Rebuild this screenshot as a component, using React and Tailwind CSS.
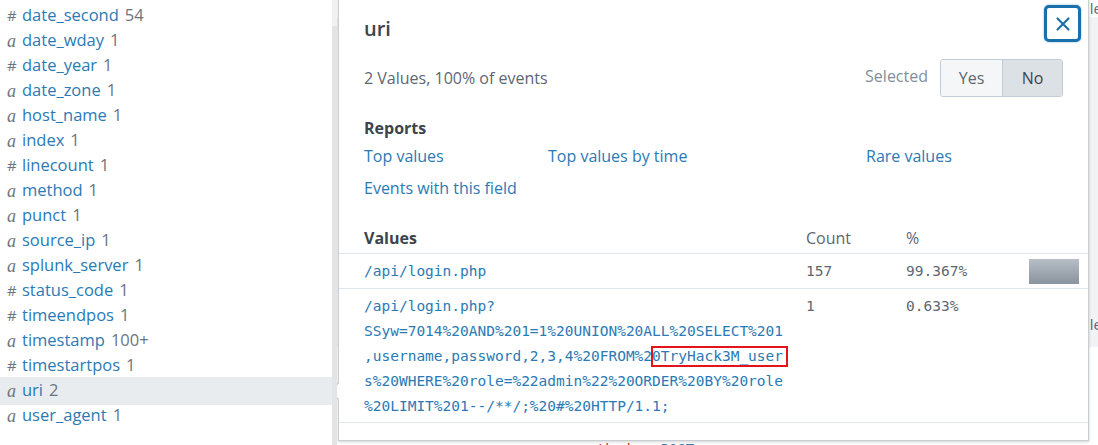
import React from "react";

const fields = [
  ["#", "date_second", "54"],
  ["a", "date_wday", "1"],
  ["#", "date_year", "1"],
  ["a", "date_zone", "1"],
  ["a", "host_name", "1"],
  ["a", "index", "1"],
  ["#", "linecount", "1"],
  ["a", "method", "1"],
  ["a", "punct", "1"],
  ["a", "source_ip", "1"],
  ["a", "splunk_server", "1"],
  ["#", "status_code", "1"],
  ["#", "timeendpos", "1"],
  ["a", "timestamp", "100+"],
  ["#", "timestartpos", "1"],
  ["a", "uri", "2"],
  ["a", "user_agent", "1"],
];

const sans = { fontFamily: "'Open Sans', sans-serif" };

function Sidebar() {
  return (
    <div className="flex w-[337px] shrink-0 bg-white">
      <div className="w-[332px] pt-[3px]">
        {fields.map(([t, name, count]) => (
          <div
            key={name}
            className={
              "flex items-center pl-[7px] text-[16.5px] " +
              (name === "uri" ? "-my-[1.5px] h-[28px] bg-[#e9ecee]" : "h-[25px]")
            }
          >
            {t === "#" ? (
              <span className="w-[15px] text-[15px] text-[#6b7580]">#</span>
            ) : (
              <span
                className="w-[15px] italic text-[#6b7580] text-[18px] leading-none"
                style={{ fontFamily: "'Liberation Serif', serif" }}
              >
                a
              </span>
            )}
            <span className="text-[#2b7ab5]">{name}</span>
            <span className="ml-[6px] text-[#6b7580]">{count}</span>
          </div>
        ))}
      </div>
      <div className="flex w-[5px] flex-col">
        <div className="h-[26px] bg-[#f0f1f2]" />
        <div className="flex-1 bg-[#e2e4e6]" />
      </div>
    </div>
  );
}

function CloseIcon() {
  return (
    <svg width="16" height="16" viewBox="0 0 16 16">
      <path d="M2.5 2.5 L13.5 13.5 M13.5 2.5 L2.5 13.5" stroke="#1d6fa9" strokeWidth="2.2" strokeLinecap="round" />
    </svg>
  );
}

function Popup() {
  const mono = { fontFamily: "'DejaVu Sans Mono', monospace" };
  return (
    <div
      className="absolute left-[1px] top-[-10px] w-[751px] h-[451px] border border-[#c9ced4] bg-white shadow-[0_1px_3px_rgba(0,0,0,0.18)]"
      style={sans}
    >
      {/* arrow */}
      <div className="absolute left-[-9px] top-[390px] h-0 w-0 border-y-[10px] border-r-[9px] border-y-transparent border-r-[#c9ced4]" />
      <div className="absolute left-[-7px] top-[391px] h-0 w-0 border-y-[9px] border-r-[8px] border-y-transparent border-r-white" />

      <button className="absolute right-[7px] top-[14px] flex h-[37px] w-[37px] items-center justify-center rounded-[5px] border-[3px] border-[#1a6fad] bg-white shadow-[0_0_2px_rgba(26,111,173,0.6)]">
        <CloseIcon />
      </button>

      <div className="pl-[25px] pt-[24px]">
        <div className="h-[28px] text-[20px] font-semibold leading-[28px] text-[#3c444d]">uri</div>
        <div className="mt-[16px] flex h-[38px] items-center pr-[25px]">
          <div className="flex-1 text-[16px] text-[#5c6773]">2 Values, 100% of events</div>
          <div className="mr-[12px] text-[16px] text-[#818d99] pb-[5px]">Selected</div>
          <div className="flex h-[38px] overflow-hidden rounded-[3px] border border-[#c3cbd4] text-[16px] text-[#5c6773]">
            <div className="flex w-[62px] items-center justify-center border-r border-[#c3cbd4] bg-[#f4f6f7]">Yes</div>
            <div className="flex w-[59px] items-center justify-center bg-[#dce1e5] text-[#3c444d]">No</div>
          </div>
        </div>
        <div className="mt-[19px] text-[16px] font-bold leading-[24px] text-[#3c444d]">Reports</div>
        <div className="mt-[4px] flex text-[16px] leading-[24px] text-[#2b7ab5]">
          <div className="w-[184px]">Top values</div>
          <div className="w-[318px]">Top values by time</div>
          <div>Rare values</div>
        </div>
        <div className="mt-[8px] text-[16px] leading-[24px] text-[#2b7ab5]">Events with this field</div>
      </div>

      <div className="mt-[22px]">
        <div className="grid h-[32px] grid-cols-[467px_100px_123px_1fr] items-center border-b border-[#e1e6eb] text-[16px]">
          <div className="pl-[25px] font-bold text-[#3c444d]">Values</div>
          <div className="text-[#5c6773]">Count</div>
          <div className="text-[#5c6773]">%</div>
          <div />
        </div>
        <div className="grid h-[35px] grid-cols-[467px_100px_123px_1fr] items-center border-b border-[#e1e6eb] pt-[1px] text-[14.5px]" style={mono}>
          <div className="pl-[25px] text-[#2b7ab5]">/api/login.php</div>
          <div className="text-[#5c6773]">157</div>
          <div className="text-[#5c6773]">99.367%</div>
          <div className="h-[25px] w-[50px] bg-gradient-to-b from-[#b7bec6] to-[#8a949e]" />
        </div>
        <div className="grid grid-cols-[467px_100px_123px_1fr] border-b border-[#e1e6eb] pb-[3px] pt-[5px] text-[14.5px] leading-[25px]" style={mono}>
          <div className="pl-[25px] text-[#2b7ab5] whitespace-pre">
            <div>/api/login.php?</div>
            <div>SSyw=7014%20AND%201=1%20UNION%20ALL%20SELECT%201</div>
            <div>
              ,username,password,2,3,4%20FROM%2
              <span className="relative">
                0TryHack3M_user
                <span className="absolute left-[-1px] right-[-5px] top-[-2px] bottom-[-3px] border-2 border-[#e3141b]" />
              </span>
            </div>
            <div>s%20WHERE%20role=%22admin%22%20ORDER%20BY%20role</div>
            <div>%20LIMIT%201--/**/;%20#%20HTTP/1.1;</div>
          </div>
          <div className="text-[#5c6773]">1</div>
          <div className="text-[#5c6773]">0.633%</div>
          <div />
        </div>
      </div>
    </div>
  );
}

export default function App() {
  return (
    <div className="flex h-[445px] w-[1098px] overflow-hidden bg-white" style={sans}>
      <Sidebar />
      <div className="relative flex-1 overflow-hidden">
        <div className="flex h-[17px] justify-end text-[15px] leading-[17px] text-[#5c6773]">
          <span className="-mr-[4px]">le</span>
        </div>
        <div className="flex h-[330px] items-end justify-end bg-[#f2f3f4] pb-[12px] text-[15px] text-[#5c6773]">
          <span className="-mr-[4px]">le</span>
        </div>
        <div className="mt-[92px] flex gap-[30px] pl-[243px] text-[14px]" style={{ fontFamily: "'DejaVu Sans Mono', monospace" }}>
          <span className="text-[#d9232b]">method</span>
          <span className="text-[#3b7fb3]">POST</span>
        </div>
        <Popup />
      </div>
    </div>
  );
}
